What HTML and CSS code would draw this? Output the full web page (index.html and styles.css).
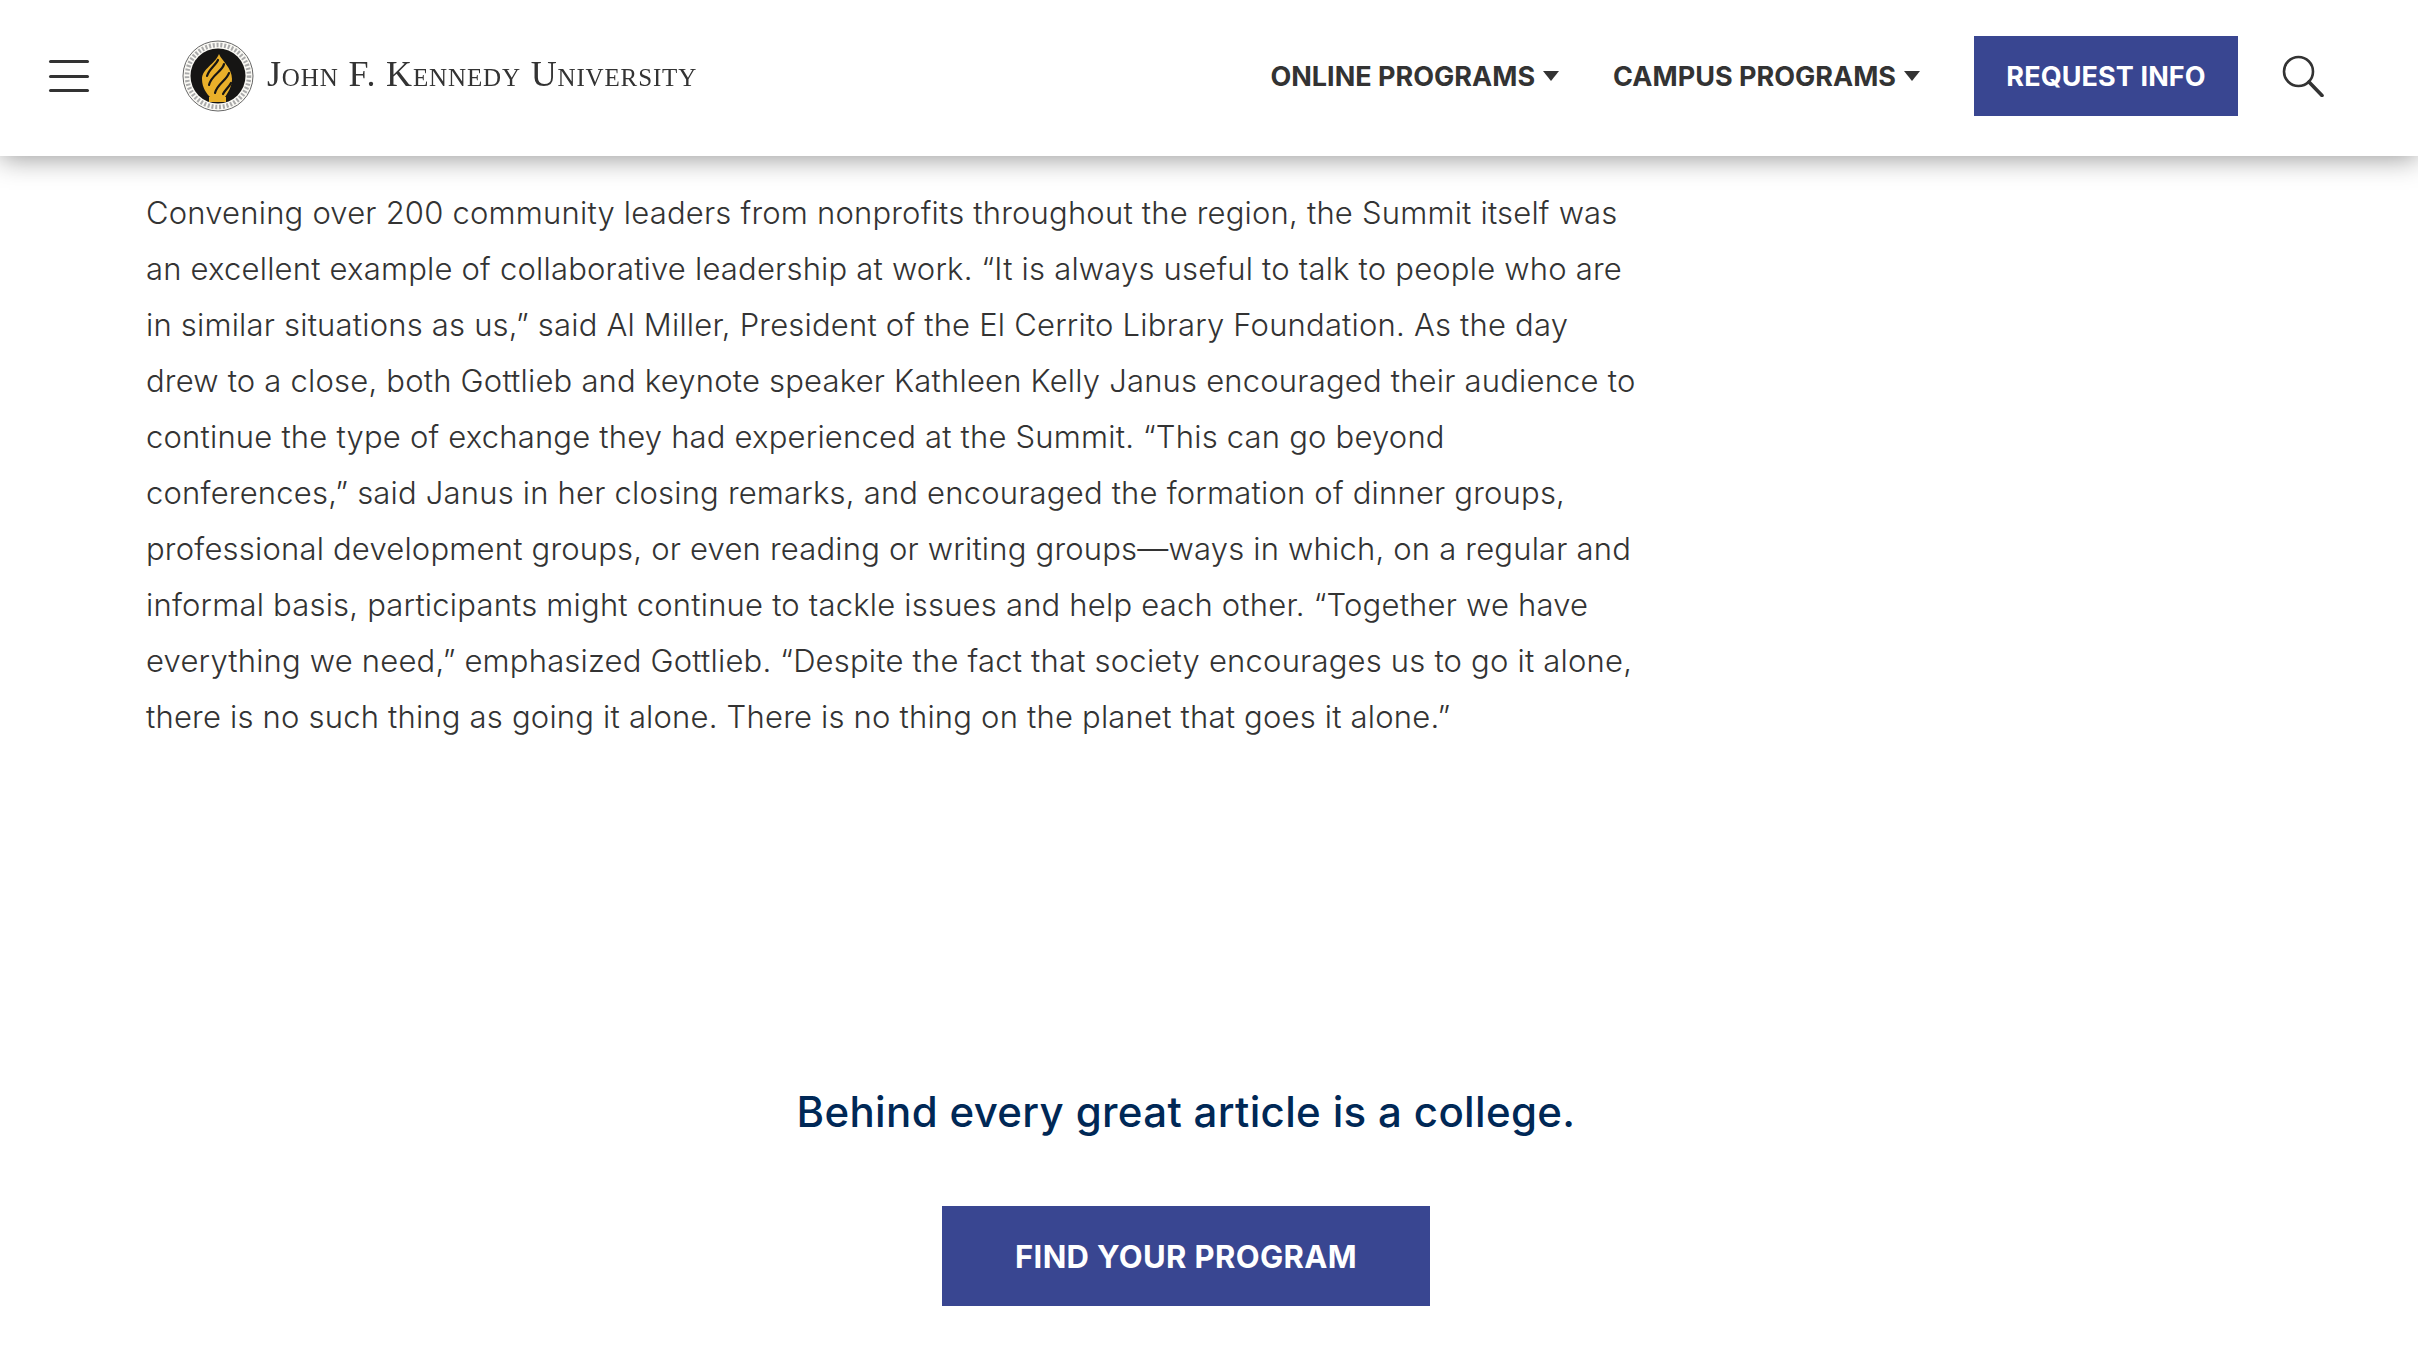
FILE: index.html
```html
<!DOCTYPE html>
<html lang="en">
<head>
<meta charset="utf-8">
<title>John F. Kennedy University</title>
<link rel="stylesheet" href="styles.css">
</head>
<body>
<header class="site-header">
  <div class="header-left">
    <button class="menu-btn" aria-label="Menu"><span></span><span></span><span></span></button>
    <a class="logo" href="#">
      <svg class="seal" viewBox="0 0 72 72" width="72" height="72" aria-hidden="true">
        <ellipse cx="36" cy="36" rx="35" ry="35" fill="#fbfaf5" stroke="#666" stroke-width="1"/>
        <ellipse cx="36" cy="36" rx="31" ry="31" fill="none" stroke="#aaa" stroke-width="4.5" stroke-dasharray="2 1.8"/>
        <ellipse cx="36" cy="36" rx="27.5" ry="27.5" fill="#161514"/>
        <path d="M37 14c3 7 13 14 13 25 0 8-5 15-7 18H28c-3-3-8-9-8-18 0-10 13-15 17-25z" fill="#e9b02a"/>
        <path d="M36 20c-2 5-9 9-11 16M42 24c-1 7-13 11-15 21M47 33c-2 7-12 11-14 20M49 43c-2 4-6 7-8 11" fill="none" stroke="#161514" stroke-width="2.2" stroke-linecap="round"/>
        <rect x="27" y="57" width="17" height="5" fill="#e9b02a"/>
      </svg>
      <span class="wordmark">John F. Kennedy University</span>
    </a>
  </div>
  <nav class="header-nav">
    <a class="nav-link" href="#">ONLINE PROGRAMS<i class="caret"></i></a>
    <a class="nav-link" href="#">CAMPUS PROGRAMS<i class="caret"></i></a>
    <a class="btn btn-small" href="#">REQUEST INFO</a>
    <a class="search" href="#" aria-label="Search">
      <svg viewBox="0 0 42 42" width="42" height="42" aria-hidden="true">
        <circle cx="16.5" cy="16.5" r="14.5" fill="none" stroke="#333" stroke-width="2.6"/>
        <path d="M27 27l13 13.5" fill="none" stroke="#333" stroke-width="3.6" stroke-linecap="round"/>
      </svg>
    </a>
  </nav>
</header>
<main class="content">
  <p class="article">Convening over 200 community leaders from nonprofits throughout the region, the Summit itself was<br>
an excellent example of collaborative leadership at work. “It is always useful to talk to people who are<br>
in similar situations as us,” said Al Miller, President of the El Cerrito Library Foundation. As the day<br>
drew to a close, both Gottlieb and keynote speaker Kathleen Kelly Janus encouraged their audience to<br>
continue the type of exchange they had experienced at the Summit. “This can go beyond<br>
conferences,” said Janus in her closing remarks, and encouraged the formation of dinner groups,<br>
professional development groups, or even reading or writing groups—ways in which, on a regular and<br>
informal basis, participants might continue to tackle issues and help each other. “Together we have<br>
everything we need,” emphasized Gottlieb. “Despite the fact that society encourages us to go it alone,<br>
there is no such thing as going it alone. There is no thing on the planet that goes it alone.”</p>
  <section class="cta">
    <h2 class="cta-title">Behind every great article is a college.</h2>
    <a class="btn btn-large" href="#">FIND YOUR PROGRAM</a>
  </section>
</main>
</body>
</html>
```

FILE: styles.css
```css
* { box-sizing: border-box; }
html, body { margin: 0; padding: 0; background: #fff; }
body { font-family: "Inter", "Liberation Sans", sans-serif; color: #333; height: 1364px; overflow: hidden; }
a { text-decoration: none; color: inherit; }

.site-header {
  height: 156px;
  display: flex;
  align-items: center;
  justify-content: space-between;
  padding: 0 94px 4px 49px;
  background: #fff;
  box-shadow: 0 2px 26px rgba(0, 0, 0, .42);
  position: relative;
}
.header-left { display: flex; align-items: center; gap: 93px; }
.menu-btn {
  width: 40px; height: 32px; padding: 0; border: 0; background: none;
  display: flex; flex-direction: column; justify-content: space-between;
}
.menu-btn span { display: block; height: 3px; border-radius: 2px; background: #333; }
.logo { display: flex; align-items: center; gap: 13px; filter: blur(.4px); }
.seal { display: block; flex: none; }
.wordmark {
  font-family: "Liberation Serif", serif;
  font-variant: small-caps;
  font-size: 36px;
  letter-spacing: .85px;
  color: #333;
  white-space: nowrap;
  line-height: 1;
  margin-bottom: 4px;
}
.header-nav { display: flex; align-items: center; }
.nav-link {
  display: flex; align-items: center;
  font-weight: 700; font-size: 27px; color: #333; white-space: nowrap;
  margin-right: 54px;
}
.caret {
  width: 0; height: 0; margin-left: 8px;
  border-left: 8px solid transparent; border-right: 8px solid transparent; border-top: 10px solid #333;
}
.btn {
  display: flex; align-items: center; justify-content: center;
  background: #394691; color: #fff; font-weight: 700; white-space: nowrap;
}
.btn-small { width: 264px; height: 80px; font-size: 27px; letter-spacing: .1px; }
.btn-large { width: 488px; height: 100px; font-size: 31px; letter-spacing: .36px; }
.search { display: block; margin-left: 44px; height: 42px; }
.search svg { display: block; }

.content { padding: 29px 0 0 146px; }
.article {
  margin: 0;
  font-size: 31px;
  line-height: 56px;
  font-weight: 300;
  letter-spacing: .2px;
  color: #333;
  white-space: nowrap;
}
.cta {
  display: flex; flex-direction: column; align-items: center;
  width: 2372px; margin-left: -146px; padding-top: 334px;
}
.cta-title {
  margin: 0 0 61px;
  font-size: 42px; line-height: 66px; font-weight: 500; letter-spacing: .34px; color: #002856;
}
```
